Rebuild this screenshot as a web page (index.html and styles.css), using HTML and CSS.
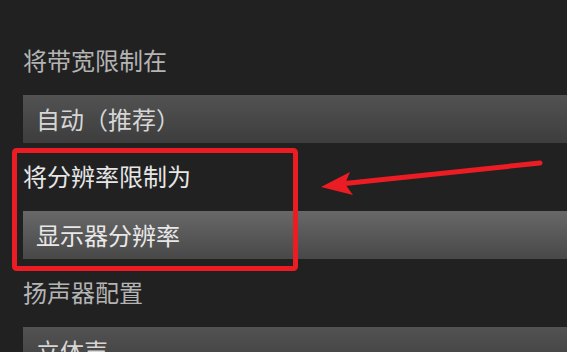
FILE: index.html
```html
<!DOCTYPE html>
<html lang="zh-CN">
<head>
    <meta charset="UTF-8">
    <meta name="viewport" content="width=device-width, initial-scale=1.0">
    <title>流设置</title>
    <link rel="stylesheet" href="styles.css">
</head>
<body>
    <div class="settings">
        <div class="setting">
            <div class="label">将带宽限制在</div>
            <div class="dropdown">自动（推荐）</div>
        </div>
        <div class="setting">
            <div class="label active">将分辨率限制为</div>
            <div class="dropdown hover">显示器分辨率</div>
        </div>
        <div class="setting">
            <div class="label">扬声器配置</div>
            <div class="dropdown">立体声</div>
        </div>
    </div>

    <!-- annotation drawn over the screenshot -->
    <svg class="annotation" width="567" height="352" viewBox="0 0 567 352">
        <rect x="14.5" y="150.5" width="281" height="118" rx="2" fill="none" stroke="#ec1c24" stroke-width="5"/>
        <line x1="540" y1="163" x2="340" y2="184" stroke="#ec1c24" stroke-width="5" stroke-linecap="round"/>
        <polygon points="321,187 350,172 345,184 353,195" fill="#ec1c24"/>
    </svg>
</body>
</html>
```

FILE: styles.css
```css
html, body {
    margin: 0;
    padding: 0;
    background: #212121;
    overflow: hidden;
}
body {
    position: relative;
    width: 567px;
    height: 352px;
    font-family: "Noto Sans CJK SC", "Noto Sans", sans-serif;
}
.settings {
    padding: 27px 0 0 23px;
}
.label {
    height: 68px;
    box-sizing: border-box;
    padding-bottom: 3px;
    display: flex;
    align-items: center;
    font-size: 24px;
    color: #b4b4b4;
}
.label.active {
    color: #e6e6e6;
}
.dropdown {
    height: 48px;
    box-sizing: border-box;
    padding: 0 0 2px 13px;
    display: flex;
    align-items: center;
    font-size: 24px;
    color: #d6d6d6;
    background: linear-gradient(#525252, #3d3d3d);
}
.dropdown.hover {
    color: #e8e8e8;
    background: linear-gradient(#686868, #484848);
}
.annotation {
    position: absolute;
    left: 0;
    top: 0;
    pointer-events: none;
}
```
